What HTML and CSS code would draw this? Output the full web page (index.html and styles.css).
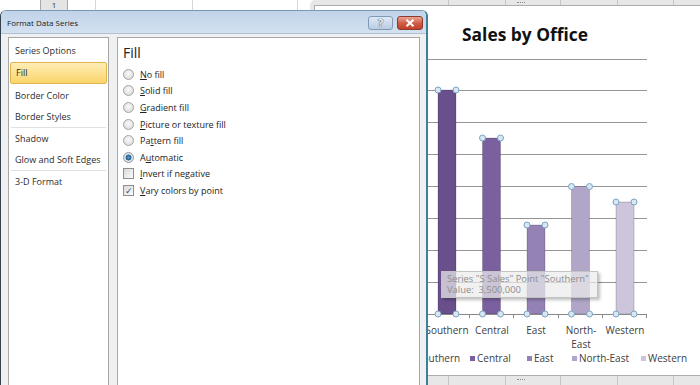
FILE: index.html
```html
<!DOCTYPE html>
<html lang="en">
<head>
  <meta charset="UTF-8">
  <title>Format Data Series</title>
  <link rel="stylesheet" href="styles.css">
</head>
<body>
  <div class="sheet">

    <div class="sheet-row">
      <div class="blank"></div>
      <div class="row-head">1</div>
      <div class="cell c1"></div>
      <div class="cell c2"></div>
      <div class="cell c3"></div>
    </div>

    <div class="chart">
      <div class="chart-plot">
        <svg width="390" height="369" viewBox="315 6 390 369">
          <text class="chart-title" x="525" y="41" text-anchor="middle" textLength="126" lengthAdjust="spacingAndGlyphs">Sales by Office</text>

          <g class="grid">
            <line x1="315" y1="59.5" x2="647" y2="59.5"/>
            <line x1="315" y1="90.5" x2="647" y2="90.5"/>
            <line x1="315" y1="122.5" x2="647" y2="122.5"/>
            <line x1="315" y1="154.5" x2="647" y2="154.5"/>
            <line x1="315" y1="186.5" x2="647" y2="186.5"/>
            <line x1="315" y1="218.5" x2="647" y2="218.5"/>
            <line x1="315" y1="250.5" x2="647" y2="250.5"/>
            <line x1="315" y1="282.5" x2="647" y2="282.5"/>
          </g>

          <g class="bars">
            <rect x="438" y="90" width="18" height="224" fill="#6a4f8d"/>
            <rect x="482.5" y="138" width="18" height="176" fill="#7b60a0"/>
            <rect x="527" y="225" width="18" height="89" fill="#9582b4"/>
            <rect x="571.5" y="186.5" width="18" height="127.5" fill="#b1a6c8"/>
            <rect x="616" y="202" width="18" height="112" fill="#ccc5db"/>
          </g>

          <g class="axis">
            <line x1="315" y1="314.5" x2="647" y2="314.5"/>
            <line x1="469.5" y1="314" x2="469.5" y2="318"/>
            <line x1="513.5" y1="314" x2="513.5" y2="318"/>
            <line x1="558.5" y1="314" x2="558.5" y2="318"/>
            <line x1="602.5" y1="314" x2="602.5" y2="318"/>
            <line x1="646.5" y1="314" x2="646.5" y2="318"/>
          </g>

          <g class="handles">
            <circle cx="438" cy="90" r="3"/><circle cx="456" cy="90" r="3"/>
            <circle cx="482.5" cy="138" r="3"/><circle cx="500.5" cy="138" r="3"/>
            <circle cx="527" cy="225" r="3"/><circle cx="545" cy="225" r="3"/>
            <circle cx="571.5" cy="186.5" r="3"/><circle cx="589.5" cy="186.5" r="3"/>
            <circle cx="616" cy="202" r="3"/><circle cx="634" cy="202" r="3"/>
            <circle cx="438" cy="314" r="3"/><circle cx="456" cy="314" r="3"/>
            <circle cx="482.5" cy="314" r="3"/><circle cx="500.5" cy="314" r="3"/>
            <circle cx="527" cy="314" r="3"/><circle cx="545" cy="314" r="3"/>
            <circle cx="571.5" cy="314" r="3"/><circle cx="589.5" cy="314" r="3"/>
            <circle cx="616" cy="314" r="3"/><circle cx="634" cy="314" r="3"/>
          </g>

          <g class="labels" text-anchor="middle">
            <text x="447" y="334">Southern</text>
            <text x="492" y="334">Central</text>
            <text x="536" y="334">East</text>
            <text x="581" y="334">North-</text>
            <text x="581" y="348">East</text>
            <text x="625" y="334">Western</text>
          </g>

          <g class="legend">
            <rect x="411" y="356" width="5" height="5" fill="#6a4f8d"/>
            <text x="417" y="362">Southern</text>
            <rect x="470" y="356" width="5" height="5" fill="#7b60a0"/>
            <text x="477" y="362">Central</text>
            <rect x="527" y="356" width="5" height="5" fill="#9582b4"/>
            <text x="534" y="362">East</text>
            <rect x="572" y="356" width="5" height="5" fill="#b1a6c8"/>
            <text x="579" y="362">North-East</text>
            <rect x="641" y="356" width="5" height="5" fill="#ccc5db"/>
            <text x="648" y="362">Western</text>
          </g>
        </svg>
      </div>
      <div class="tip">Series "S Sales" Point "Southern"<br>Value:&nbsp; 3,500,000</div>
    </div>

    <div class="dialog">
      <div class="titlebar">
        <span class="title">Format Data Series</span>
        <span class="btn help">?</span>
        <span class="btn close">
          <svg width="10" height="8" viewBox="0 0 10 8"><path d="M1.5 0.8 L8.5 7.2 M8.5 0.8 L1.5 7.2" stroke="#fff" stroke-width="2"/></svg>
        </span>
      </div>

      <div class="dialog-body">
        <ul class="nav">
          <li>Series Options</li>
          <li class="sel">Fill</li>
          <li>Border Color</li>
          <li>Border Styles</li>
          <li class="sep"></li>
          <li>Shadow</li>
          <li>Glow and Soft Edges</li>
          <li class="sep"></li>
          <li>3-D Format</li>
        </ul>

        <div class="pane">
          <h2>Fill</h2>
          <div class="opt"><span class="radio"></span><span><u>N</u>o fill</span></div>
          <div class="opt"><span class="radio"></span><span><u>S</u>olid fill</span></div>
          <div class="opt"><span class="radio"></span><span><u>G</u>radient fill</span></div>
          <div class="opt"><span class="radio"></span><span><u>P</u>icture or texture fill</span></div>
          <div class="opt"><span class="radio"></span><span>Pa<u>t</u>tern fill</span></div>
          <div class="opt"><span class="radio on"></span><span>A<u>u</u>tomatic</span></div>
          <div class="opt"><span class="check"></span><span><u>I</u>nvert if negative</span></div>
          <div class="opt"><span class="check">&#10003;</span><span><u>V</u>ary colors by point</span></div>
        </div>
      </div>
    </div>

  </div>
</body>
</html>
```

FILE: styles.css
```css
body {
  margin: 0;
  font-family: "Open Sans", "Liberation Sans", sans-serif;
  color: #222;
}
.sheet {
  position: relative;
  width: 700px;
  height: 385px;
  overflow: hidden;
  background: #fff;
}

/* spreadsheet row behind everything */
.sheet-row {
  display: flex;
  height: 12px;
}
.blank {
  width: 40px;
}
.row-head {
  width: 26px;
  background: #e4e4e4;
  border-left: 1px solid #a8a8a8;
  border-right: 1px solid #a8a8a8;
  font-size: 8px;
  line-height: 9px;
  text-align: center;
  color: #333;
}
.cell {
  border-right: 1px solid #d6d6d6;
}
.c1 { width: 27px; }
.c2 { width: 96px; }
.c3 { width: 104px; }

/* chart object */
.chart {
  position: absolute;
  left: 310px;
  top: 0;
  width: 395px;
  height: 400px;
  padding: 6px 0 0 5px;
  box-sizing: border-box;
  border-radius: 5px 0 0 0;
  background-color: #e7e7e7;
  background-image:
    linear-gradient(#c6c6c6, #c6c6c6),
    linear-gradient(#c6c6c6, #c6c6c6),
    linear-gradient(#c6c6c6, #c6c6c6),
    linear-gradient(#c6c6c6, #c6c6c6),
    linear-gradient(#c6c6c6, #c6c6c6);
  background-size: 1px 100%;
  background-repeat: no-repeat;
  background-position: 138px 0, 195px 0, 250px 0, 307px 0, 363px 0;
}
.chart::before,
.chart::after {
  content: "";
  position: absolute;
  left: 207px;
  width: 8px;
  border-top: 1px dotted #8c8c8c;
}
.chart::before { top: 2px; }
.chart::after { top: 379px; }
.chart-plot {
  height: 369px;
  background: #fff;
  box-shadow: 0 0 0 1px #adadad;
  overflow: hidden;
}
.chart-plot svg {
  display: block;
}
.chart-title {
  font-size: 17px;
  font-weight: bold;
  fill: #111;
}
.grid line {
  stroke: #959595;
  stroke-width: 1;
}
.axis line {
  stroke: #888;
  stroke-width: 1;
}
.bars rect {
  stroke: rgba(0, 0, 0, 0.18);
  stroke-width: 1;
}
.handles circle {
  fill: #d9e7f3;
  stroke: #7ba3c3;
  stroke-width: 1;
}
.labels text,
.legend text {
  font-size: 10px;
  fill: #404040;
}
.tip {
  position: absolute;
  left: 131px;
  top: 271px;
  width: 145px;
  height: 23px;
  padding: 1px 5px;
  background: rgba(236, 236, 236, 0.72);
  border: 1px solid #c3c3c3;
  box-shadow: 2px 2px 3px rgba(0, 0, 0, 0.25);
  font-size: 9.4px;
  line-height: 11px;
  color: #8d8d8d;
  white-space: nowrap;
}

/* dialog window */
.dialog {
  position: absolute;
  left: 0;
  top: 10px;
  width: 425px;
  height: 380px;
  display: flex;
  flex-direction: column;
  background: #eef0f2;
  border-left: 1px solid #34424d;
  border-right: 2px solid #3e8096;
  border-top: 1px solid #7d98b2;
  border-radius: 6px 6px 0 0;
}
.titlebar {
  height: 23px;
  display: flex;
  align-items: center;
  padding: 1px 3px 0 6px;
  box-sizing: border-box;
  background: linear-gradient(#c1d3e9, #d3e1f1);
  border-bottom: 1px solid #b2c1d1;
  border-radius: 5px 5px 0 0;
}
.title {
  font-size: 8px;
  color: #1a1a1a;
}
.btn {
  height: 14px;
  box-sizing: border-box;
  border-radius: 3px;
  display: flex;
  align-items: center;
  justify-content: center;
}
.help {
  width: 25px;
  margin-left: auto;
  border: 1px solid #8299b4;
  background: linear-gradient(#dfe9f5, #b9cce3);
  font-size: 11px;
  font-weight: bold;
  color: #eef4fb;
  text-shadow: 0 0 1px #33465e, 0 0 1px #33465e;
}
.close {
  width: 26px;
  margin-left: 4px;
  border: 1px solid #8c3a2e;
  background: linear-gradient(#e9a493, #cf5a43 55%, #c0412b);
}

.dialog-body {
  flex: 1;
  display: flex;
  gap: 8px;
  padding: 3px 6px 0 7px;
}
.nav {
  width: 99px;
  margin: 0;
  padding: 2px 0 0;
  list-style: none;
  background: #fff;
  border: 1px solid #a7a7a7;
}
.nav li {
  height: 21px;
  line-height: 21px;
  padding-left: 6px;
  font-size: 9px;
  color: #2c2c2c;
  white-space: nowrap;
}
.nav .sel {
  height: 20px;
  line-height: 20px;
  margin: 1px 1px;
  padding-left: 5px;
  border: 1px solid #e0b54f;
  border-radius: 2px;
  background: linear-gradient(#fdedb5, #fbd56b);
}
.nav .sep {
  height: 1px;
  padding: 0;
  margin: 0 2px;
  background: #e0e0e0;
}

.pane {
  flex: 1;
  padding: 6px 5px;
  background: #fff;
  border: 1px solid #a7a7a7;
}
.pane h2 {
  margin: 0 0 4px;
  font-size: 14px;
  font-weight: normal;
  line-height: 18px;
  color: #222;
}
.opt {
  display: flex;
  align-items: center;
  gap: 6px;
  height: 16.6px;
  font-size: 9px;
  color: #222;
}
.radio {
  width: 9px;
  height: 9px;
  border: 1px solid #a3a3a3;
  border-radius: 50%;
  background: radial-gradient(circle at 50% 40%, #fbfbfb, #d5d5d5);
}
.radio.on {
  border-color: #8d9aa5;
  background: radial-gradient(circle, #63a3d2 0, #1b5a8c 2.6px, #e8e8e8 3.3px, #d2d2d2 100%);
}
.check {
  width: 9px;
  height: 9px;
  border: 1px solid #8f8f8f;
  background: linear-gradient(135deg, #d9d9d9, #fbfbfb);
  font-size: 9px;
  line-height: 9px;
  text-align: center;
  color: #2f4a78;
}
```
